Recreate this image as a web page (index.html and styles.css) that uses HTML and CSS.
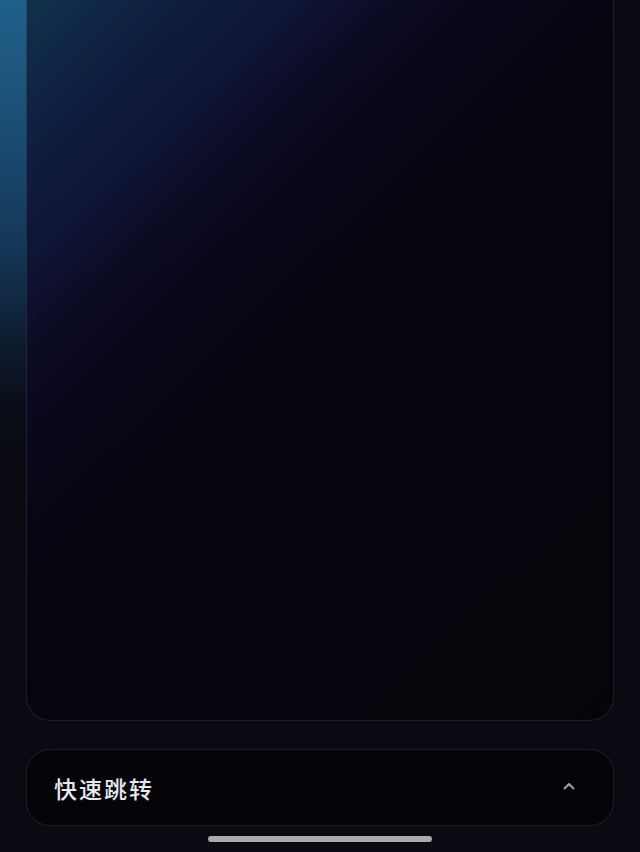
FILE: index.html
```html
<!DOCTYPE html>
<html lang="zh-CN">
<head>
    <meta charset="UTF-8">
    <meta name="viewport" content="width=device-width, initial-scale=1.0">
    <title>快速跳转</title>
    <link rel="stylesheet" href="styles.css">
</head>
<body>
    <div class="page">
        <!-- Main panel -->
        <div class="panel"></div>

        <!-- Quick jump -->
        <div class="jump">
            <span class="jump-title">快速跳转</span>
            <svg class="chevron" width="12" height="8" viewBox="0 0 12 8">
                <path d="M1.5 6.5 L6 2 L10.5 6.5" fill="none" stroke="#9c9cb2" stroke-width="2" stroke-linecap="round" stroke-linejoin="round"/>
            </svg>
        </div>

        <div class="home-bar"></div>
    </div>
</body>
</html>
```

FILE: styles.css
```css
/* General Styles */
html, body {
    margin: 0;
    padding: 0;
}

body {
    font-family: 'Noto Sans CJK SC', 'Noto Sans', sans-serif;
    background-color: #0a0a12;
    background-image: linear-gradient(to bottom, #1f6189 0, #1b4d74 130px, #143656 250px, #0d1a2c 350px, #0a0d18 410px, #0a0a12 470px);
    background-repeat: no-repeat;
    min-height: 852px;
    color: #fff;
}

.page {
    display: flex;
    flex-direction: column;
    align-items: center;
    padding: 0 26px;
    background: linear-gradient(to right, transparent 0, transparent 26px, #0a0a12 26px);
    min-height: 852px;
    box-sizing: border-box;
}

.panel {
    width: 100%;
    height: 721px;
    box-sizing: border-box;
    border: 1px solid rgba(255, 255, 255, 0.1);
    border-top: none;
    border-radius: 0 0 24px 24px;
    background: linear-gradient(136deg, #10304c 0, #0f2444 8%, #0f1a3d 15%, #0e1434 21%, #0c0c26 27%, #09071a 34%, #060510 45%, #050409 100%);
    background-origin: border-box;
    background-repeat: no-repeat;
}

.jump {
    width: 100%;
    height: 77px;
    margin-top: 28px;
    box-sizing: border-box;
    border: 1px solid rgba(255, 255, 255, 0.1);
    border-radius: 24px;
    background: #050409;
    display: flex;
    align-items: center;
    justify-content: space-between;
    padding: 0 38px 0 27px;
}

.jump-title {
    font-size: 23px;
    font-weight: 500;
    letter-spacing: 2px;
    color: #e8e8ee;
}

.chevron {
    display: block;
    margin-top: -3px;
}

.home-bar {
    width: 224px;
    height: 6px;
    margin-top: 10px;
    border-radius: 3px;
    background: #a9a9ae;
}
```
